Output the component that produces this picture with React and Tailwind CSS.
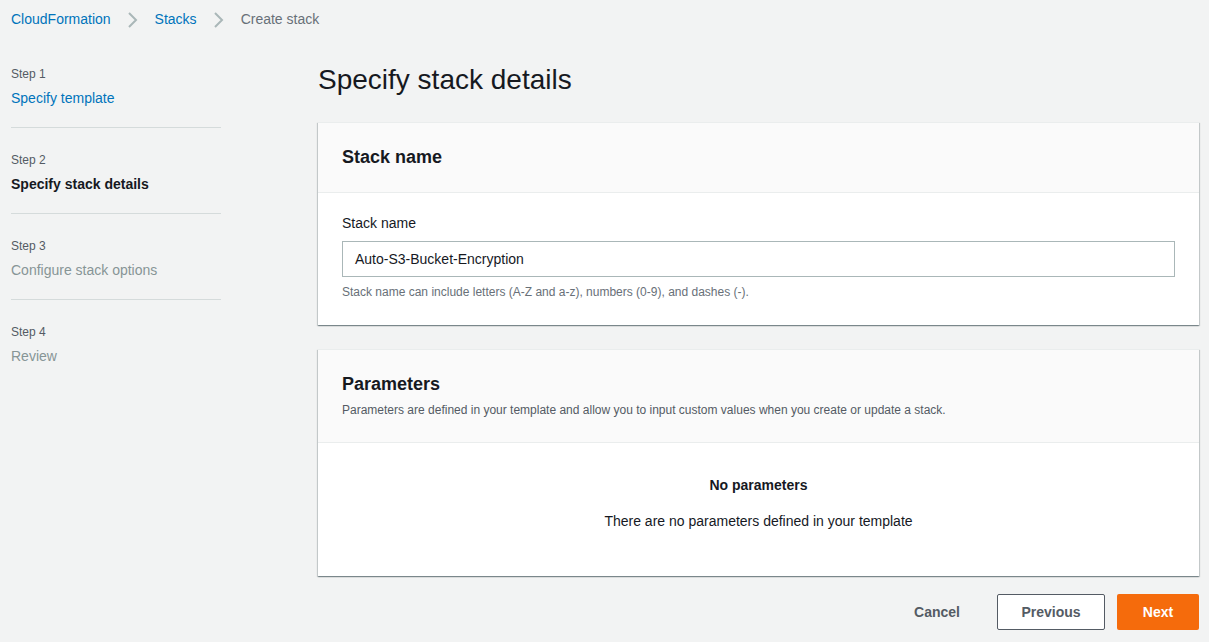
import React from "react";

const font = { fontFamily: '"Liberation Sans", Arial, sans-serif' };

function Chevron() {
  return (
    <svg width="16" height="18" viewBox="0 0 16 18" className="mx-[14px]">
      <path d="M4 2 L11 9 L4 16" fill="none" stroke="#aab7b8" strokeWidth="2" />
    </svg>
  );
}

const cardShadow =
  "shadow-[0_1px_1px_0_rgba(0,28,36,0.3),1px_1px_1px_0_rgba(0,28,36,0.15),-1px_1px_1px_0_rgba(0,28,36,0.15)]";

export default function App() {
  return (
    <div className="w-[1209px] h-[642px] bg-[#f2f3f3] text-[#16191f] overflow-hidden" style={font}>
      <div className="flex items-center h-[38px] pl-[11px] pt-[1px] text-[14px]">
        <span className="text-[#0073bb]">CloudFormation</span>
        <Chevron />
        <span className="text-[#0073bb]">Stacks</span>
        <Chevron />
        <span className="text-[#687078]">Create stack</span>
      </div>
      <div className="flex">
        <div className="w-[210px] ml-[11px] mt-[27px] shrink-0">
          <div className="pb-[19px] border-b border-[#d5dbdb]">
            <div className="text-[12px] text-[#545b64] leading-[18px]">Step 1</div>
            <div className="text-[14px] text-[#0073bb] leading-[20px] mt-[5px]">Specify template</div>
          </div>
          <div className="pt-[23px] pb-[19px] border-b border-[#d5dbdb]">
            <div className="text-[12px] text-[#545b64] leading-[18px]">Step 2</div>
            <div className="text-[14px] font-bold leading-[20px] mt-[5px]">Specify stack details</div>
          </div>
          <div className="pt-[23px] pb-[19px] border-b border-[#d5dbdb]">
            <div className="text-[12px] text-[#545b64] leading-[18px]">Step 3</div>
            <div className="text-[14px] text-[#879596] leading-[20px] mt-[5px]">Configure stack options</div>
          </div>
          <div className="pt-[23px]">
            <div className="text-[12px] text-[#545b64] leading-[18px]">Step 4</div>
            <div className="text-[14px] text-[#879596] leading-[20px] mt-[5px]">Review</div>
          </div>
        </div>
        <div className="ml-[97px] w-[881px]">
          <h1 className="text-[28px] leading-[36px] mt-[24px] mb-[24px]">Specify stack details</h1>
          <div className={`bg-white border-t border-[#eaeded] ${cardShadow}`}>
            <div className="bg-[#fafafa] h-[70px] border-b border-[#eaeded] flex items-center px-[24px]">
              <h2 className="text-[18px] font-bold">Stack name</h2>
            </div>
            <div className="px-[24px] pt-[20px] pb-[25px]">
              <div className="text-[14px] leading-[20px]">Stack name</div>
              <div className="mt-[8px] w-[833px] h-[36px] border border-[#aab7b8] flex items-center px-[12px] text-[14px]">
                Auto-S3-Bucket-Encryption
              </div>
              <div className="text-[12px] text-[#687078] mt-[7px] leading-[16px]">
                Stack name can include letters (A-Z and a-z), numbers (0-9), and dashes (-).
              </div>
            </div>
          </div>
          <div className={`mt-[24px] bg-white border-t border-[#eaeded] ${cardShadow}`}>
            <div className="bg-[#fafafa] h-[93px] border-b border-[#eaeded] px-[24px] pt-[22px]">
              <h2 className="text-[18px] font-bold leading-[24px]">Parameters</h2>
              <div className="text-[12px] text-[#545b64] leading-[16px] mt-[6px]">
                Parameters are defined in your template and allow you to input custom values when you create or update a stack.
              </div>
            </div>
            <div className="h-[133px] flex flex-col items-center pt-[32px] text-[14px]">
              <div className="font-bold leading-[20px]">No parameters</div>
              <div className="leading-[20px] mt-[16px]">There are no parameters defined in your template</div>
            </div>
          </div>
          <div className="flex justify-end items-center mt-[18px] text-[14px] font-bold">
            <div className="text-[#545b64] mr-[37px]">Cancel</div>
            <div className="h-[36px] w-[108px] border border-[#545b64] rounded-[2px] bg-white flex items-center justify-center text-[#545b64]">
              Previous
            </div>
            <div className="ml-[12px] h-[36px] w-[82px] rounded-[2px] bg-[#f56b0c] flex items-center justify-center text-white">
              Next
            </div>
          </div>
        </div>
      </div>
    </div>
  );
}
